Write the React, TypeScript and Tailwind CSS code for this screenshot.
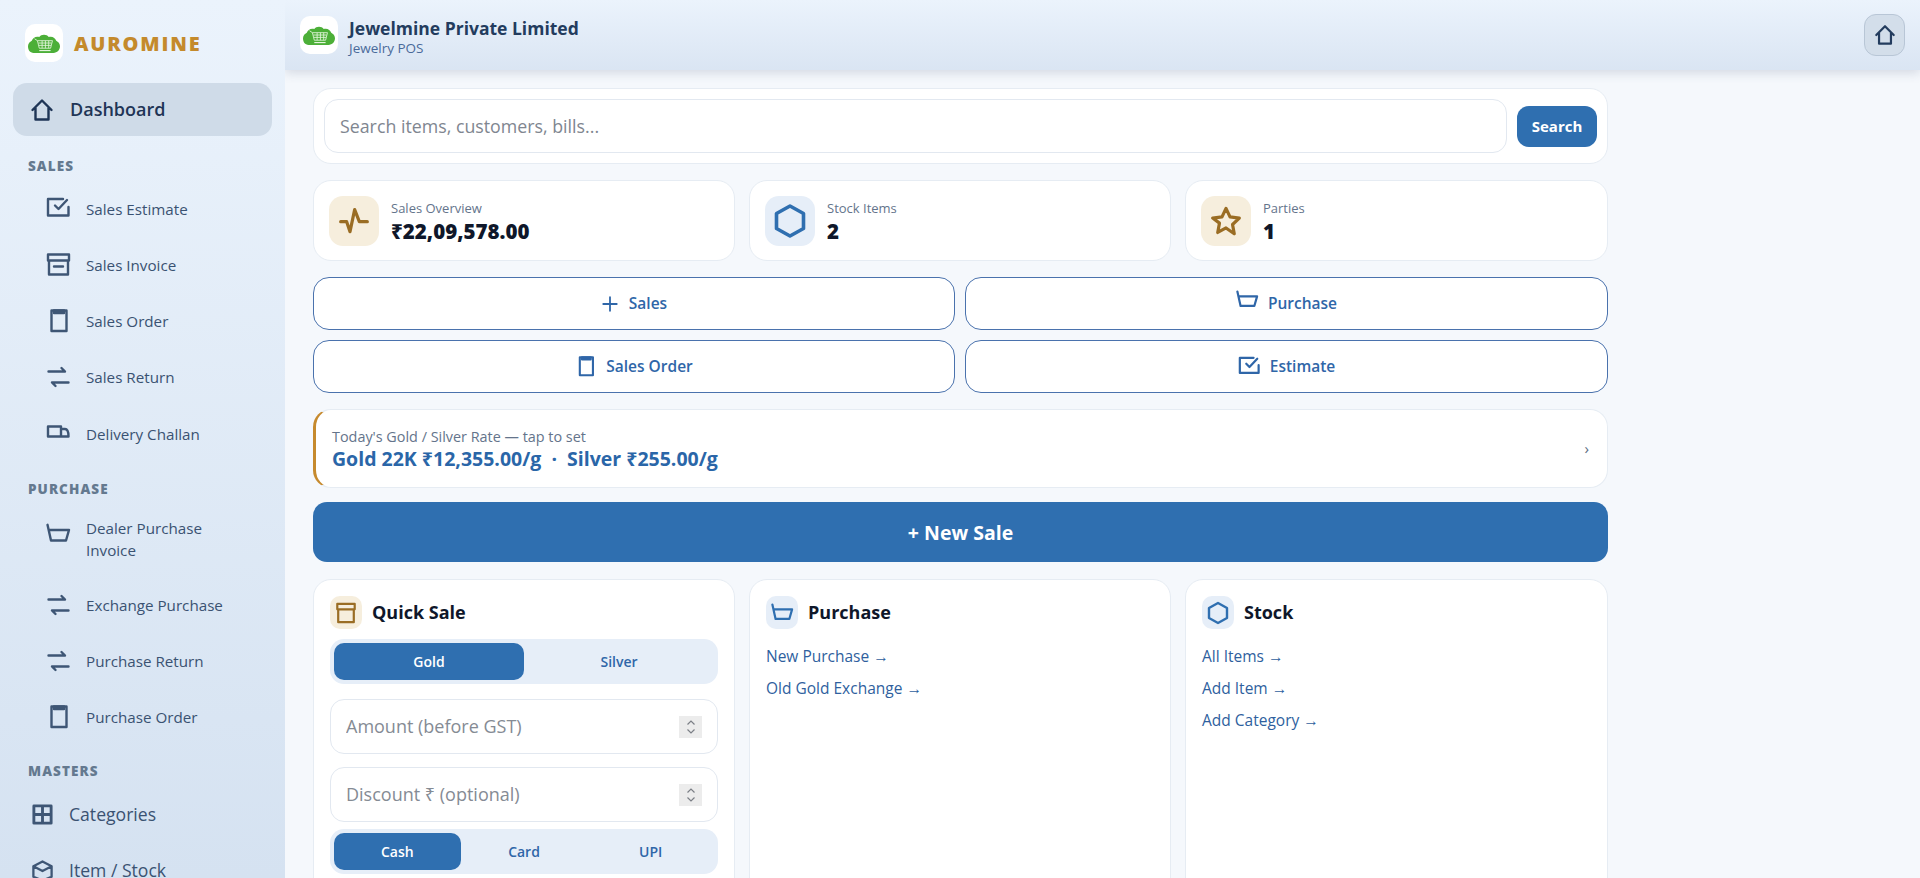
import type { ReactNode } from "react";

const FONT = "font-['Open_Sans','Noto_Sans',sans-serif]";

type IconProps = { className?: string };

function Svg({ className, children }: IconProps & { children: ReactNode }) {
  return (
    <svg
      viewBox="0 0 24 24"
      fill="none"
      stroke="currentColor"
      strokeWidth="2.4"
      strokeLinecap="round"
      strokeLinejoin="round"
      className={`overflow-visible ${className ?? ""}`}
    >
      {children}
    </svg>
  );
}

const HomeIcon = (p: IconProps) => (
  <Svg {...p}>
    <path d="M2.5 12 12 2.5 21.5 12M5.5 10v11.5h13V10" />
  </Svg>
);
const CheckIcon = (p: IconProps) => (
  <Svg {...p}>
    <path d="M22.5 10v8.5H2V2h15" />
    <path d="m9 8.5 3.5 3.5L21 3" />
  </Svg>
);
const ArchiveIcon = (p: IconProps) => (
  <Svg {...p}>
    <path d="M2 1.5h21v6H2zM3 7.5v14h19v-14M8 13.5h9" />
  </Svg>
);
const DrawerIcon = (p: IconProps) => (
  <Svg {...p}>
    <path d="M2.5 2h19v6h-19zM3.5 8v14h17V8" />
  </Svg>
);
const OrderIcon = (p: IconProps) => (
  <Svg {...p}>
    <path d="M5.5 1.5h15V22h-15z" />
    <path d="M8 1.5h10v2.5H8z" fill="currentColor" />
  </Svg>
);
const SwapIcon = (p: IconProps) => (
  <Svg {...p}>
    <path d="M2.5 6.5H19L15.5 3M22.5 17.5H6l3.5 3.5" />
  </Svg>
);
const TruckIcon = (p: IconProps) => (
  <Svg {...p}>
    <path d="M2 4.5h13v10H2zM15 7h4c2 0 3.5 3 3.5 7.5H15" />
  </Svg>
);
const BasketIcon = (p: IconProps) => (
  <Svg {...p}>
    <path d="M1.5 2.8 5 18.5h15L23 8H3" />
  </Svg>
);
const GridIcon = (p: IconProps) => (
  <Svg {...p}>
    <path d="M3 3h18v18H3zM12 3v18M3 12h18" strokeWidth="3" strokeLinecap="butt" />
  </Svg>
);
const BoxIcon = (p: IconProps) => (
  <Svg {...p}>
    <path d="M12 2.5 21.5 7.5v11L12 22.5l-9.5-4v-11zM2.5 7.5l9.5 5 9.5-5" />
  </Svg>
);
const PulseIcon = (p: IconProps) => (
  <Svg {...p}>
    <path d="M2 12.5h4.5L9 20l3.5-16.5 3.5 9h6" />
  </Svg>
);
const HexIcon = (p: IconProps) => (
  <Svg {...p}>
    <path d="m12 2 9 5v10l-9 5-9-5V7z" />
  </Svg>
);
const StarIcon = (p: IconProps) => (
  <Svg {...p}>
    <path d="m12 2.5 3 6.4 7 .9-5.1 4.8 1.3 7L12 17.2l-6.2 3.4 1.3-7L2 9.8l7-.9z" />
  </Svg>
);
const PlusIcon = (p: IconProps) => (
  <Svg {...p}>
    <path d="M12 3v18M3 12h18" />
  </Svg>
);

function Logo() {
  return (
    <div className="flex h-[38px] w-[38px] shrink-0 items-center justify-center rounded-[10px] bg-white">
      <svg viewBox="0 0 34 22" className="h-[21px] w-[32px]">
        <path
          d="M6 21C2 21 0 18 0 14c0-3 2-5 4-6 1-3 4-5 8-4 2-3 8-3 10 0 4-1 7 1 8 4 2 1 4 3 4 6 0 4-3 7-7 7z"
          fill="#4caf38"
        />
        <g fill="none" stroke="#e4f5dd" strokeWidth="0.9">
          <path d="M7 6l3 2h16l-2 8H12L10 8" />
          <path d="M11 10.5h14M11.5 13h13M15 8v8M18.5 8v8M22 8v8" />
          <path d="M12 18.5h12" strokeWidth="1.2" />
        </g>
      </svg>
    </div>
  );
}

function SectionLabel({ text, className }: { text: string; className: string }) {
  return (
    <div
      className={`flex h-[22px] shrink-0 items-center pl-[28px] text-[13.5px] font-extrabold tracking-[0.08em] text-[#64798f] ${className}`}
    >
      {text}
    </div>
  );
}

function SubItem({
  icon,
  iconClass = "",
  className = "h-[56px]",
  children,
}: {
  icon: ReactNode;
  iconClass?: string;
  className?: string;
  children: ReactNode;
}) {
  return (
    <div
      className={`flex shrink-0 items-center gap-4 pl-[46px] pr-10 text-[15.2px] font-medium leading-[22px] text-[#3a5272] ${className}`}
    >
      <span className={`flex w-6 shrink-0 justify-center text-[#3e5675] ${iconClass}`}>{icon}</span>
      <span>{children}</span>
    </div>
  );
}

function MasterItem({ icon, children }: { icon: ReactNode; children: ReactNode }) {
  return (
    <div className="flex h-[56px] shrink-0 items-center gap-[15px] pl-[30px] text-[17.6px] font-medium text-[#3a5272]">
      <span className="flex w-6 shrink-0 justify-center text-[#3e5675]">{icon}</span>
      <span>{children}</span>
    </div>
  );
}

function Sidebar() {
  return (
    <aside className="relative z-20 flex h-full w-[285px] shrink-0 flex-col overflow-hidden bg-gradient-to-b from-[#ebf3fc] to-[#d5e2f1]">
      <div className="mt-[24px] flex shrink-0 items-center gap-[11px] pl-[25px]">
        <Logo />
        <span className="pt-[1px] text-[20px] font-extrabold tracking-[0.09em] text-[#c48a2c]">AUROMINE</span>
      </div>
      <div className="mx-[13px] mt-[21px] flex h-[53px] shrink-0 items-center gap-4 rounded-[14px] bg-[#cfdbe8] pl-[17px] text-[18px] font-semibold text-[#1f3556]">
        <HomeIcon className="h-6 w-6 text-[#1f3556]" />
        Dashboard
      </div>

      <SectionLabel text="SALES" className="mt-[19px] mb-1" />
      <SubItem icon={<CheckIcon className="h-[24px] w-[24px]" />}>Sales Estimate</SubItem>
      <SubItem icon={<ArchiveIcon className="h-[24px] w-[24px]" />}>Sales Invoice</SubItem>
      <SubItem icon={<OrderIcon className="h-[24px] w-[24px]" />}>Sales Order</SubItem>
      <SubItem icon={<SwapIcon className="h-[24px] w-[24px]" />}>Sales Return</SubItem>
      <SubItem className="h-[58px]" icon={<TruckIcon className="h-[24px] w-[24px]" />}>
        Delivery Challan
      </SubItem>

      <SectionLabel text="PURCHASE" className="mt-[15px]" />
      <SubItem
        className="h-[77px]"
        iconClass="-translate-y-[5px]"
        icon={<BasketIcon className="h-[24px] w-[24px]" />}
      >
        Dealer Purchase Invoice
      </SubItem>
      <SubItem icon={<SwapIcon className="h-[24px] w-[24px]" />}>Exchange Purchase</SubItem>
      <SubItem icon={<SwapIcon className="h-[24px] w-[24px]" />}>Purchase Return</SubItem>
      <SubItem icon={<OrderIcon className="h-[24px] w-[24px]" />}>Purchase Order</SubItem>

      <SectionLabel text="MASTERS" className="mt-[15px] mb-1" />
      <MasterItem icon={<GridIcon className="h-[23px] w-[23px]" />}>Categories</MasterItem>
      <MasterItem icon={<BoxIcon className="h-[23px] w-[23px]" />}>Item / Stock</MasterItem>
    </aside>
  );
}

function Header() {
  return (
    <header className="relative z-10 flex h-[70px] shrink-0 items-center bg-gradient-to-b from-[#ebf3fc] to-[#dae5f3] pl-[15px] pr-[15px] shadow-[0_3px_10px_rgba(60,80,110,0.18)]">
      <Logo />
      <div className="ml-[11px] flex flex-col">
        <span className="pt-[1px] text-[17.5px] font-bold leading-[24px] text-[#233c5e]">
          Jewelmine Private Limited
        </span>
        <span className="text-[13.5px] leading-[16px] text-[#4a6a9a]">Jewelry POS</span>
      </div>
      <button className="ml-auto flex h-[42px] w-[41px] items-center justify-center rounded-[12px] border border-[#b8c6d6] bg-[#d3deea] text-[#233c5e]">
        <HomeIcon className="h-[22px] w-[22px]" />
      </button>
    </header>
  );
}

function StatCard({
  icon,
  tone,
  label,
  value,
}: {
  icon: ReactNode;
  tone: string;
  label: string;
  value: string;
}) {
  return (
    <div className="flex h-[81px] items-center gap-3 rounded-[18px] border border-[#e6ecf3] bg-white pl-[15px]">
      <div className={`flex h-[50px] w-[50px] items-center justify-center rounded-[14px] ${tone}`}>{icon}</div>
      <div className="flex flex-col pt-[2px]">
        <span className="text-[13px] leading-[20px] text-[#64748b]">{label}</span>
        <span className="text-[20.5px] font-extrabold leading-[27px] text-[#0f172a]">{value}</span>
      </div>
    </div>
  );
}

function ActionButton({ icon, children }: { icon: ReactNode; children: ReactNode }) {
  return (
    <button className="flex h-[53px] items-center justify-center gap-[10px] rounded-[16px] border border-[#4a72ad] bg-white text-[15.5px] font-semibold text-[#2f66a8]">
      {icon}
      {children}
    </button>
  );
}

function Segments({ items }: { items: string[] }) {
  return (
    <div className="flex h-[45px] items-center rounded-[14px] bg-[#e6eef8] p-1">
      {items.map((item, i) => (
        <div
          key={item}
          className={`flex h-[37px] flex-1 items-center justify-center rounded-[10px] text-[14px] font-semibold ${
            i === 0 ? "bg-[#2f6fb0] text-white" : "text-[#2f66a8]"
          }`}
        >
          {item}
        </div>
      ))}
    </div>
  );
}

function NumberField({ placeholder }: { placeholder: string }) {
  return (
    <div className="flex h-[55px] items-center rounded-[14px] border border-[#e2e8f0] bg-white pl-[15px] pr-[15px]">
      <input
        placeholder={placeholder}
        className="min-w-0 flex-1 bg-transparent text-[18px] outline-none placeholder:text-[#858b94]"
      />
      <span className="flex h-[22px] w-[23px] flex-col items-center justify-center bg-[#ececec] text-[#7b7f86]">
        <svg viewBox="0 0 10 16" className="h-[16px] w-[10px]" fill="none" stroke="currentColor" strokeWidth="1.2">
          <path d="m1.5 5.5 3.5-3.5 3.5 3.5M1.5 10.5 5 14l3.5-3.5" />
        </svg>
      </span>
    </div>
  );
}

function PanelTitle({ icon, tone, children }: { icon: ReactNode; tone: string; children: ReactNode }) {
  return (
    <div className="flex items-center gap-[10px]">
      <div className={`flex h-[33px] w-[32px] items-center justify-center rounded-[10px] ${tone}`}>{icon}</div>
      <span className="text-[18px] font-bold text-[#0f172a]">{children}</span>
    </div>
  );
}

function LinkList({ items }: { items: string[] }) {
  return (
    <div className="mt-[16px] flex flex-col gap-[10px] text-[15.5px] leading-[22px] text-[#2f5f9e]">
      {items.map((item) => (
        <span key={item}>{item} →</span>
      ))}
    </div>
  );
}

export default function App() {
  return (
    <div className={`flex h-[878px] w-full overflow-hidden bg-[#f5f8fc] ${FONT}`}>
      <Sidebar />
      <main className="flex min-w-0 flex-1 flex-col">
        <Header />
        <div className="flex w-[1323px] flex-col gap-[14px] pl-[28px] pt-[18px]">
          <div className="flex h-[76px] items-center gap-[10px] rounded-[18px] border border-[#e6ecf3] bg-white px-[10px]">
            <input
              placeholder="Search items, customers, bills..."
              className="h-[54px] min-w-0 flex-1 rounded-[14px] border border-[#e2e8f0] bg-white pl-[15px] text-[17.8px] outline-none placeholder:text-[#808690]"
            />
            <button className="h-[41px] w-[80px] rounded-[12px] bg-[#2f6fb0] text-[15px] font-bold text-white">
              Search
            </button>
          </div>

          <div className="mt-[2px] grid grid-cols-[422px_422px_1fr] gap-[14px]">
            <StatCard
              tone="bg-[#f6eedd]"
              label="Sales Overview"
              value="₹22,09,578.00"
              icon={<PulseIcon className="h-8 w-8 text-[#9a6d24]" />}
            />
            <StatCard
              tone="bg-[#e6eef8]"
              label="Stock Items"
              value="2"
              icon={<HexIcon className="h-9 w-9 text-[#2f6fb0]" />}
            />
            <StatCard
              tone="bg-[#f6eedd]"
              label="Parties"
              value="1"
              icon={<StarIcon className="h-8 w-8 text-[#9a6d24]" />}
            />
          </div>

          <div className="mt-[2px] grid grid-cols-[642px_1fr] gap-x-[10px] gap-y-[10px]">
            <ActionButton icon={<PlusIcon className="h-[18px] w-[18px]" />}>Sales</ActionButton>
            <ActionButton icon={<BasketIcon className="mb-2 h-[22px] w-[22px]" />}>Purchase</ActionButton>
            <ActionButton icon={<OrderIcon className="h-[21px] w-[21px]" />}>Sales Order</ActionButton>
            <ActionButton icon={<CheckIcon className="h-[22px] w-[22px]" />}>Estimate</ActionButton>
          </div>

          <div className="mt-[2px] flex h-[79px] items-center justify-between rounded-[18px] border border-l-[3px] border-[#e6ecf3] border-l-[#c68a2e] bg-white pl-[16px] pr-[18px]">
            <div className="flex flex-col">
              <span className="text-[14.4px] leading-[20px] text-[#64748b]">
                Today's Gold / Silver Rate — tap to set
              </span>
              <span className="text-[19.5px] font-bold leading-[24px] text-[#2a66a8]">
                Gold 22K ₹12,355.00/g &nbsp;·&nbsp; Silver ₹255.00/g
              </span>
            </div>
            <span className="text-[15px] text-[#5b6b80]">›</span>
          </div>

          <button className="h-[60px] rounded-[14px] bg-[#2f6fb0] pt-[1px] text-[19.5px] font-bold text-white">
            + New Sale
          </button>

          <div className="mt-[3px] grid grid-cols-[422px_422px_1fr] gap-[14px]">
            <div className="flex h-[320px] flex-col rounded-[18px] border border-[#e6ecf3] bg-white px-4 pt-[16px]">
              <PanelTitle tone="bg-[#f6eedd]" icon={<DrawerIcon className="h-[22px] w-[22px] text-[#9a6d24]" />}>
                Quick Sale
              </PanelTitle>
              <div className="mt-[10px] flex flex-col gap-[15px]">
                <Segments items={["Gold", "Silver"]} />
                <NumberField placeholder="Amount (before GST)" />
              </div>
              <div className="mt-[13px]">
                <NumberField placeholder="Discount ₹ (optional)" />
              </div>
              <div className="mt-[7px]">
                <Segments items={["Cash", "Card", "UPI"]} />
              </div>
            </div>
            <div className="h-[320px] rounded-[18px] border border-[#e6ecf3] bg-white px-4 pt-[16px]">
              <PanelTitle tone="bg-[#e6eef8]" icon={<BasketIcon className="h-[22px] w-[22px] text-[#2f6fb0]" />}>
                Purchase
              </PanelTitle>
              <LinkList items={["New Purchase", "Old Gold Exchange"]} />
            </div>
            <div className="h-[320px] rounded-[18px] border border-[#e6ecf3] bg-white px-4 pt-[16px]">
              <PanelTitle tone="bg-[#e6eef8]" icon={<HexIcon className="h-[24px] w-[24px] text-[#2f6fb0]" />}>
                Stock
              </PanelTitle>
              <LinkList items={["All Items", "Add Item", "Add Category"]} />
            </div>
          </div>
        </div>
      </main>
    </div>
  );
}
